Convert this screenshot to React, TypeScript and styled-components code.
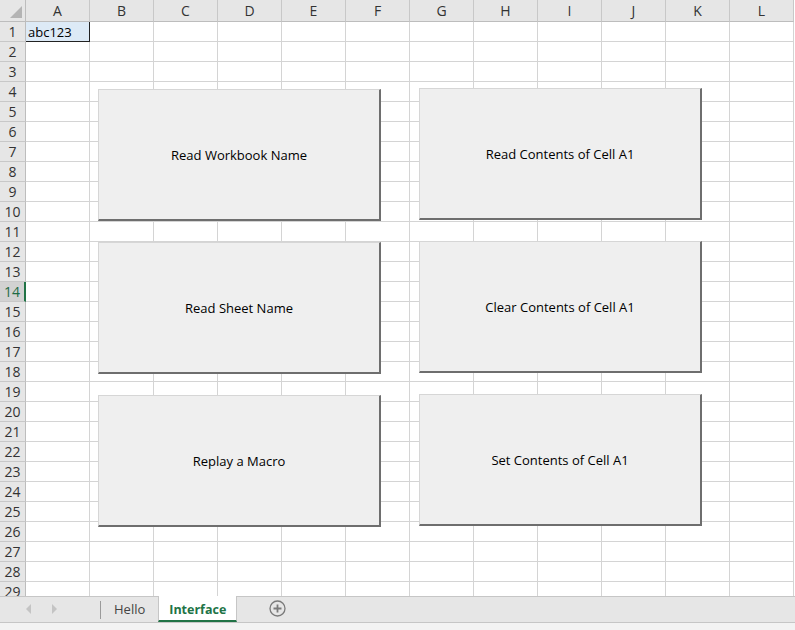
import React from "react";
import styled, { createGlobalStyle, css } from "styled-components";

const Global = createGlobalStyle`
  html, body { margin: 0; padding: 0; background: #ffffff; }
  body { font-family: "Open Sans", "Liberation Sans", Arial, sans-serif; }
`;

const COLS = ["A", "B", "C", "D", "E", "F", "G", "H", "I", "J", "K", "L"];
const ROWS = Array.from({ length: 29 }, (_, i) => i + 1);

const Window = styled.div`
  width: 795px;
  height: 630px;
  display: flex;
  flex-direction: column;
  overflow: hidden;
  background: #ffffff;
`;

const SheetArea = styled.div`
  position: relative;
  height: 596px;
  overflow: hidden;
  flex: none;
`;

const Grid = styled.div`
  display: grid;
  grid-template-columns: 26px repeat(12, 64px);
  grid-template-rows: 22px repeat(29, 20px);
`;

const Corner = styled.div`
  background: #e6e6e6;
  border-right: 1px solid #bdbdbd;
  border-bottom: 1px solid #bdbdbd;
  box-sizing: border-box;
  position: relative;
  &::after {
    content: "";
    position: absolute;
    right: 3px;
    bottom: 3px;
    width: 0;
    height: 0;
    border-left: 12px solid transparent;
    border-bottom: 12px solid #b4b4b4;
  }
`;

const ColHead = styled.div`
  background: #e6e6e6;
  border-right: 1px solid #c8c8c8;
  border-bottom: 1px solid #bdbdbd;
  box-sizing: border-box;
  display: flex;
  align-items: center;
  justify-content: center;
  font-size: 14px;
  color: #333;
`;

const RowHead = styled.div<{ $active?: boolean }>`
  background: #e6e6e6;
  border-right: 1px solid #bdbdbd;
  border-bottom: 1px solid #c8c8c8;
  box-sizing: border-box;
  display: flex;
  align-items: center;
  justify-content: center;
  font-size: 14px;
  color: #333;
  ${(p) =>
    p.$active &&
    css`
      background: #d2d2d2;
      color: #1e6b44;
      border-right: 2px solid #217346;
    `}
`;

const Cell = styled.div<{ $selected?: boolean }>`
  border-right: 1px solid #d4d4d4;
  border-bottom: 1px solid #d4d4d4;
  box-sizing: border-box;
  font-size: 13px;
  color: #000;
  padding: 0 2px;
  display: flex;
  align-items: center;
  white-space: nowrap;
  ${(p) =>
    p.$selected &&
    css`
      background: #ddeaf6;
      border-right: 1px solid #222;
      border-bottom: 1px solid #222;
    `}
`;

const MacroButton = styled.div<{ $x: number; $y: number }>`
  position: absolute;
  left: ${(p) => p.$x}px;
  top: ${(p) => p.$y}px;
  width: 283px;
  height: 132px;
  box-sizing: border-box;
  background: #efefef;
  border-top: 1px solid #d6d6d6;
  border-left: 1px solid #d6d6d6;
  border-right: 2px solid #6e6e6e;
  border-bottom: 2px solid #6e6e6e;
  display: flex;
  align-items: center;
  justify-content: center;
  font-size: 13px;
  color: #000;
`;

const TabBar = styled.div`
  height: 25px;
  flex: none;
  background: #e6e6e6;
  border-top: 1px solid #c6c6c6;
  border-bottom: 1px solid #c6c6c6;
  display: flex;
  align-items: stretch;
`;

const NavArea = styled.div`
  width: 100px;
  display: flex;
  align-items: center;
  gap: 21px;
  padding-left: 26px;
  padding-bottom: 2px;
  box-sizing: border-box;
`;

const Arrow = styled.div<{ $dir: "left" | "right" }>`
  width: 0;
  height: 0;
  border-top: 5px solid transparent;
  border-bottom: 5px solid transparent;
  ${(p) =>
    p.$dir === "left"
      ? css`border-right: 5px solid #c4c4c4;`
      : css`border-left: 5px solid #c4c4c4;`}
`;

const Separator = styled.div`
  width: 1px;
  background: #9a9a9a;
  margin: 4px 0 3px;
`;

const Tab = styled.div<{ $active?: boolean }>`
  display: flex;
  align-items: center;
  padding: 0 13px 2px;
  font-size: 13px;
  color: #444;
  box-sizing: border-box;
  ${(p) =>
    p.$active &&
    css`
      background: #ffffff;
      color: #217346;
      font-weight: 700;
      font-size: 12.5px;
      border-left: 1px solid #c6c6c6;
      border-right: 1px solid #c6c6c6;
      border-bottom: 2px solid #217346;
      margin-top: -1px;
      width: 79px;
      padding: 3px 0 0;
      justify-content: center;
    `}
`;

const AddArea = styled.div`
  display: flex;
  align-items: center;
  padding-left: 32px;
  padding-bottom: 2px;
`;

const StatusStrip = styled.div`
  flex: 1;
  background: #f3f3f3;
`;

const PlusIcon = () => (
  <svg width="17" height="17" viewBox="0 0 17 17">
    <circle cx="8.5" cy="8.5" r="7.5" fill="none" stroke="#7a7a7a" strokeWidth="1.3" />
    <path d="M8.5 4.5v8M4.5 8.5h8" stroke="#7a7a7a" strokeWidth="1.8" />
  </svg>
);

const buttons = [
  { x: 98, y: 89, label: "Read Workbook Name" },
  { x: 419, y: 88, label: "Read Contents of Cell A1" },
  { x: 98, y: 242, label: "Read Sheet Name" },
  { x: 419, y: 241, label: "Clear Contents of Cell A1" },
  { x: 98, y: 395, label: "Replay a Macro" },
  { x: 419, y: 394, label: "Set Contents of Cell A1" },
];

export default function App() {
  return (
    <>
      <Global />
      <Window>
        <SheetArea>
          <Grid>
            <Corner />
            {COLS.map((c) => (
              <ColHead key={c}>{c}</ColHead>
            ))}
            {ROWS.map((r) => (
              <React.Fragment key={r}>
                <RowHead $active={r === 14}>{r}</RowHead>
                {COLS.map((c) => (
                  <Cell key={c} $selected={r === 1 && c === "A"}>
                    {r === 1 && c === "A" ? "abc123" : null}
                  </Cell>
                ))}
              </React.Fragment>
            ))}
          </Grid>
          {buttons.map((b) => (
            <MacroButton key={b.label} $x={b.x} $y={b.y}>
              {b.label}
            </MacroButton>
          ))}
        </SheetArea>
        <TabBar>
          <NavArea>
            <Arrow $dir="left" />
            <Arrow $dir="right" />
          </NavArea>
          <Separator />
          <Tab>Hello</Tab>
          <Tab $active>Interface</Tab>
          <AddArea>
            <PlusIcon />
          </AddArea>
        </TabBar>
        <StatusStrip />
      </Window>
    </>
  );
}
